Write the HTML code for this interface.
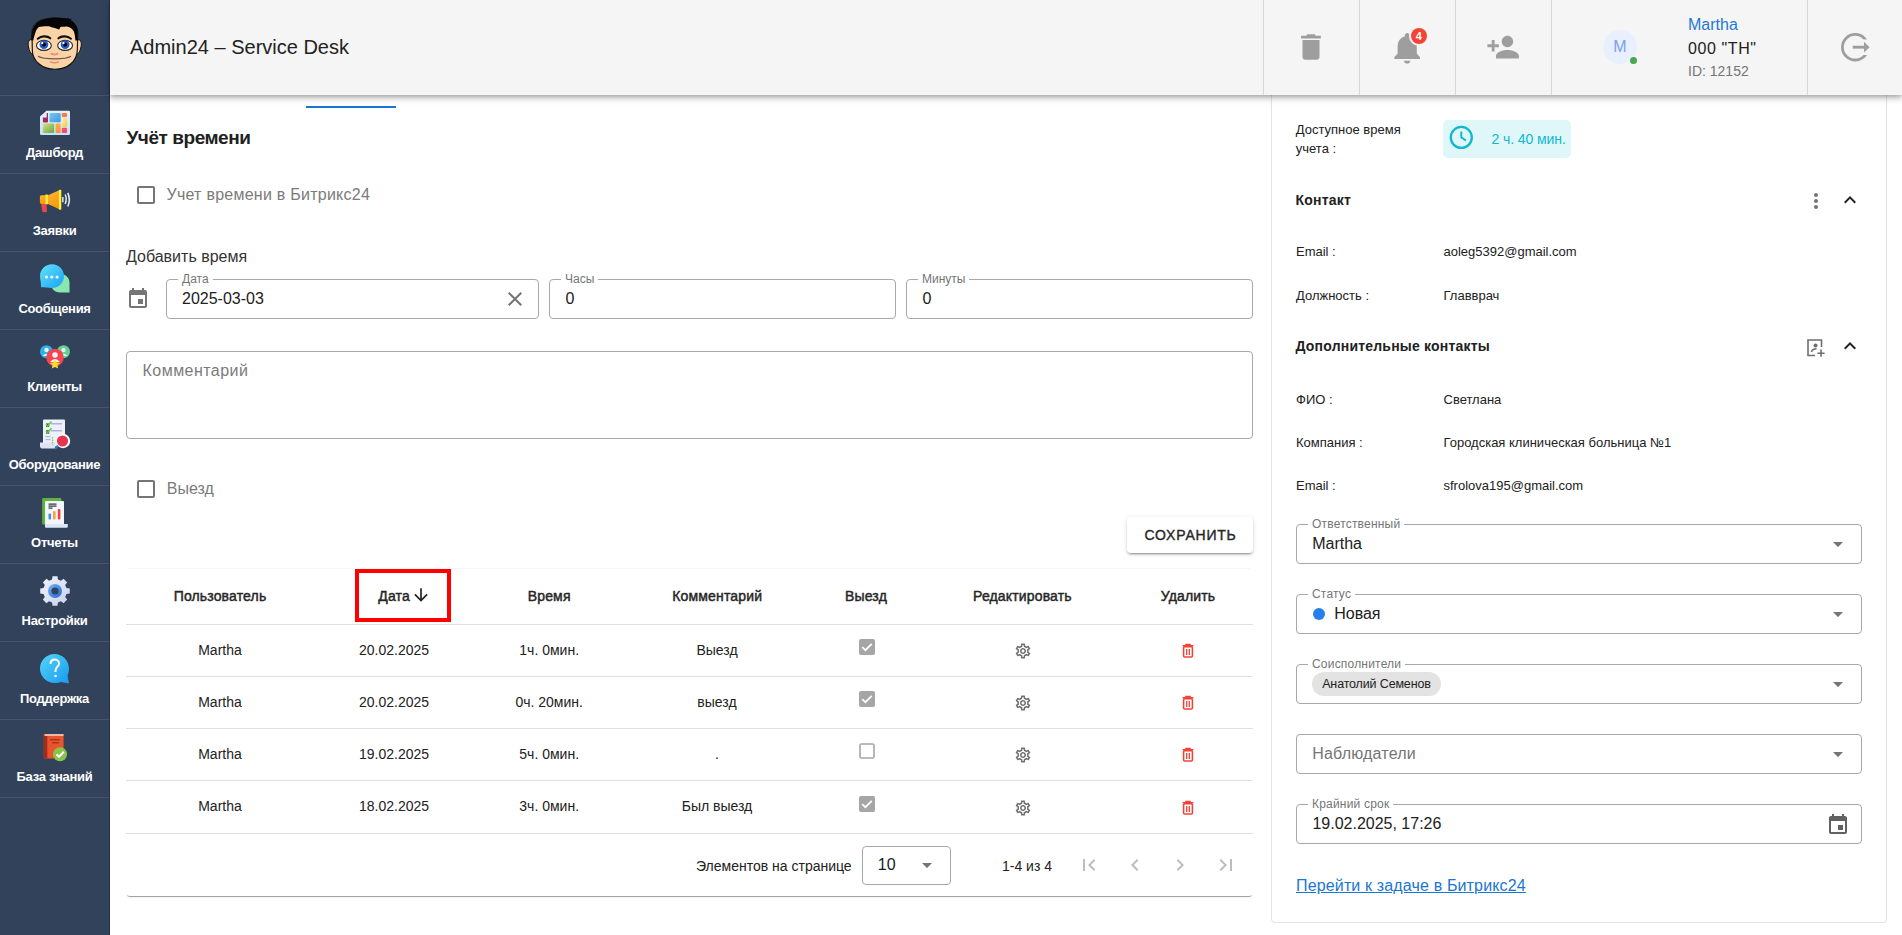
<!DOCTYPE html>
<html lang="ru">
<head>
<meta charset="utf-8">
<title>Admin24 – Service Desk</title>
<style>
*{box-sizing:border-box;margin:0;padding:0}
html,body{width:1902px;height:935px;overflow:hidden;background:#fff;font-family:"Liberation Sans",sans-serif;color:#212121}
.a{position:absolute}
.t{position:absolute;line-height:1;white-space:nowrap}
#side{position:absolute;left:0;top:0;width:110px;height:935px;background:#32425b;border-right:1px solid #26334a}
.si{position:absolute;left:0;width:109px;height:78px;border-top:1px solid #46556c}
.si .lbl{position:absolute;left:0;width:109px;text-align:center;top:50px;font-size:13px;font-weight:700;letter-spacing:-0.3px;color:#fff;line-height:1}
.si svg{position:absolute;left:39px;top:15px}
#hdr{position:absolute;left:110px;top:0;width:1792px;height:95px;background:#f5f5f5;box-shadow:0 2px 4px -1px rgba(0,0,0,.2),0 4px 5px 0 rgba(0,0,0,.14),0 1px 10px 0 rgba(0,0,0,.12);z-index:5}
.vd{position:absolute;top:0;width:1px;height:95px;background:#d6d6d6}
.fld{position:absolute;border:1px solid #a8a8a8;border-radius:4px;height:40px}
.flab{position:absolute;top:-7.3px;left:11px;padding:0 4px;background:#fff;font-size:12px;line-height:1;color:#757575;white-space:nowrap}
.cb{position:absolute;width:18px;height:18px;border:2px solid #757575;border-radius:2px}
.th{position:absolute;top:589px;font-size:14px;font-weight:400;-webkit-text-stroke:0.45px #262626;letter-spacing:0.15px;line-height:1;white-space:nowrap;color:#262626;transform:translateX(-50%)}
.td{position:absolute;font-size:14px;line-height:1;white-space:nowrap;color:#212121;transform:translateX(-50%)}
.hl{position:absolute;left:126px;width:1127px;height:1px;background:#e0e0e0}
.rl{position:absolute;font-size:13px;line-height:1;white-space:nowrap;color:#212121}
</style>
</head>
<body>
<!-- SIDEBAR -->
<div id="side">
  <svg class="a" style="left:0;top:0" width="110" height="95" viewBox="0 0 110 95">
    <path d="M32.5 40 C29 38.5 27.5 42 28.5 47 C29.3 51 30.5 53.5 33 54.5 Z" fill="#fbd3a6" stroke="#111" stroke-width="1"/>
    <path d="M77 40 C80.5 38.5 82 42 81 47 C80.2 51 79 53.5 76.5 54.5 Z" fill="#fbd3a6" stroke="#111" stroke-width="1"/>
    <path d="M32 34 C31.5 22 42 18 55 18 C68 18 78 22 77.8 34 L77.3 50 C77 61 68 69.2 55 69.2 C42 69.2 32.5 61 32.3 50 Z" fill="#fbd3a6" stroke="#111" stroke-width="1.1"/>
    <path d="M31.6 40.5 C30.5 25 38 18 55 17.8 C62 17.8 66 18.3 67.5 18.6 L68 17.6 L69.3 19.2 L71.4 18.6 L71 20.4 C76 23 78.5 28 77.8 40.5 L75.4 40.5 C75 34 74 31 72.8 30 C70.5 27.5 68 26.5 66 26.6 C63.5 26.8 61.5 27 60.5 27 L59.2 29.6 C56 28.5 53 27.5 50.8 27 L49 26.2 C45 26 41 26.5 39 27 C37.3 28.3 36.2 30.5 35.8 31.5 C34.5 35 33.8 38 33.2 40.5 Z" fill="#050505"/>
    <path d="M37.8 38.7 C40 36.8 42.5 36.3 44.5 36.4 C47 36.5 49 37.2 50.3 38.3" stroke="#111" stroke-width="2.1" fill="none" stroke-linecap="round"/>
    <path d="M58.4 38.3 C59.7 37.2 61.7 36.5 64.2 36.4 C66.2 36.3 68.7 36.8 71 38.7" stroke="#111" stroke-width="2.1" fill="none" stroke-linecap="round"/>
    <ellipse cx="43.9" cy="45.4" rx="7.4" ry="5" fill="#fff" stroke="#222" stroke-width="1.1"/>
    <ellipse cx="65.1" cy="45.4" rx="7.4" ry="5" fill="#fff" stroke="#222" stroke-width="1.1"/>
    <circle cx="43.9" cy="44.6" r="4.4" fill="#2a5cc4"/>
    <circle cx="65.1" cy="44.6" r="4.4" fill="#2a5cc4"/>
    <circle cx="43.9" cy="44.6" r="2.1" fill="#06061c"/>
    <circle cx="65.1" cy="44.6" r="2.1" fill="#06061c"/>
    <circle cx="42.3" cy="43.2" r="1.1" fill="#fff"/>
    <circle cx="63.5" cy="43.2" r="1.1" fill="#fff"/>
    <path d="M50.8 53.3 C53 54.8 56 54.8 58.2 53.3" stroke="#ec8a72" stroke-width="1.7" fill="none"/>
    <path d="M38 56.2 C42 58.6 48 58.8 55 58.8 C62 58.8 67.5 58.4 71 56.2" stroke="#6d5a4a" stroke-width="1.2" fill="none"/>
    <path d="M50 61.6 C53 63.2 56 63.2 58.8 61.6" stroke="#ec8a72" stroke-width="1.5" fill="none"/>
  </svg>
  <div class="si" style="top:95px">
   <svg class="a" style="left:0;top:-1px" width="109" height="78" viewBox="0 0 109 78">
    <defs><linearGradient id="dg1" x1="0" y1="0" x2="0" y2="1"><stop offset="0" stop-color="#e3f3fd"/><stop offset="1" stop-color="#c2e3f9"/></linearGradient>
    <linearGradient id="dgb" x1="0" y1="0" x2="1" y2="1"><stop offset="0" stop-color="#7cc7f7"/><stop offset="1" stop-color="#3d97de"/></linearGradient>
    <linearGradient id="dgg" x1="0" y1="0" x2="1" y2="1"><stop offset="0" stop-color="#dede7c"/><stop offset="1" stop-color="#64a64a"/></linearGradient>
    <linearGradient id="dgy" x1="0" y1="0" x2="1" y2="1"><stop offset="0" stop-color="#fff2cf"/><stop offset="1" stop-color="#ffc428"/></linearGradient>
    <linearGradient id="dgo" x1="0" y1="0" x2="0" y2="1"><stop offset="0" stop-color="#ffb637"/><stop offset="1" stop-color="#ff8c48"/></linearGradient></defs>
    <path d="M46.5 15.7 L68.8 15.7 Q70 15.7 70 17 L70 38.8 Q70 40.1 68.8 40.1 L41.3 40.1 Q40 40.1 40 38.8 L40 21.5 Z" fill="url(#dg1)"/>
    <path d="M46.7 17.9 L48 17.9 L48 26.5 Q48 27.4 47 27.4 L43.9 27.4 Q42.9 27.4 42.9 26.4 L42.9 22.4 L46.7 22.4 Z" fill="#a22a5e"/>
    <rect x="49.5" y="17.9" width="11.2" height="9.3" rx="1" fill="url(#dgb)"/>
    <rect x="61.8" y="17.9" width="5.3" height="4" rx="1" fill="#ff7c3e"/>
    <rect x="61.8" y="23" width="5.3" height="8.9" rx="1" fill="url(#dgy)"/>
    <rect x="42.9" y="28.5" width="11.3" height="9.6" rx="1" fill="url(#dgg)"/>
    <rect x="55.6" y="28.5" width="5.1" height="9.6" rx="1" fill="url(#dgo)"/>
    <rect x="61.8" y="32.8" width="5.3" height="5.3" rx="1" fill="#ff4a6e"/>
 </svg>
   <div class="lbl">Дашборд</div>
  </div>
  <div class="si" style="top:173px">
   <svg class="a" style="left:0;top:-1px" width="109" height="78" viewBox="0 0 109 78">
    <defs><linearGradient id="mgp" x1="0" y1="0" x2="0.3" y2="1"><stop offset="0" stop-color="#ffb833"/><stop offset="1" stop-color="#f79a0c"/></linearGradient></defs>
    <path d="M41.1 31 L46.5 31 L47 38.5 Q46.8 39.2 45.5 39.2 L43.5 39.2 Q42.5 39.2 42.3 38.2 Z" fill="#ec4450"/>
    <path d="M41.5 22.3 L45.5 22.3 L45.5 30.9 L41.5 30.9 Q39.9 30.9 39.9 29.3 L39.9 23.9 Q39.9 22.3 41.5 22.3 Z" fill="url(#mgp)"/>
    <path d="M48 22.3 L59.3 17.2 L59.3 36.3 L48 30.9 Z" fill="url(#mgp)"/>
    <rect x="45.2" y="21.6" width="2.8" height="9.6" fill="#ffe83a"/>
    <rect x="58.9" y="16.8" width="2.4" height="19.9" rx="0.8" fill="#fff03a"/>
    <rect x="62" y="24" width="1.7" height="5.2" fill="#c9d1e6"/>
    <path d="M65.2 21.5 Q67.2 26.2 65.2 31" stroke="#e4e7ee" stroke-width="1.5" fill="none"/>
    <path d="M67.8 19.9 Q70.8 26.7 67.8 33.5" stroke="#e4e7ee" stroke-width="1.6" fill="none"/>
 </svg>
   <div class="lbl">Заявки</div>
  </div>
  <div class="si" style="top:251px">
   <svg class="a" style="left:0;top:-1px" width="109" height="78" viewBox="0 0 109 78">
    <defs><linearGradient id="mg1" x1="0" y1="0" x2="1" y2="1"><stop offset="0" stop-color="#62e4fc"/><stop offset="1" stop-color="#1aa0f2"/></linearGradient>
    <linearGradient id="mg2" x1="0" y1="0" x2="1" y2="1"><stop offset="0" stop-color="#8de6b4"/><stop offset="1" stop-color="#86e8ae"/></linearGradient></defs>
    <path d="M60 23 C66 23 69.5 27 69.5 32 L69.5 41.5 L60 41.5 C54.5 41.5 51 37.5 51 32.5 C51 27 54.5 23 60 23 Z" fill="url(#mg2)"/>
    <path d="M52 13.3 C58.8 13.3 64 18.5 64 25 C64 31.5 58.8 37 52 37 C48 37 44 36.3 41 36.3 L40.8 31 C40.3 29 40 27 40 25 C40 18.5 45.2 13.3 52 13.3 Z" fill="url(#mg1)"/>
    <circle cx="46.5" cy="26" r="1.6" fill="#fff"/>
    <circle cx="51.8" cy="26" r="1.6" fill="#fff"/>
    <circle cx="57.1" cy="26" r="1.6" fill="#fff"/>
 </svg>
   <div class="lbl">Сообщения</div>
  </div>
  <div class="si" style="top:329px">
   <svg class="a" style="left:0;top:-1px" width="109" height="78" viewBox="0 0 109 78">
    <circle cx="46.5" cy="22.7" r="6.5" fill="#2db3ec"/>
    <circle cx="46.5" cy="21" r="2.2" fill="#e8f4fb"/><path d="M42.5 27 Q46.5 22.5 50.5 27" fill="#e8f4fb"/>
    <circle cx="63.5" cy="22.7" r="6.5" fill="#5fd194"/>
    <circle cx="63.5" cy="21" r="2.2" fill="#e8f7ee"/><path d="M59.5 27 Q63.5 22.5 67.5 27" fill="#e8f7ee"/>
    <circle cx="55" cy="28.5" r="8.8" fill="#f7454f"/>
    <circle cx="55" cy="26" r="2.8" fill="#f4f4f4"/><path d="M50 33 Q55 27 60 33" fill="#f4f4f4"/>
    <path d="M55 30.5 L56.6 33.6 L60 34 L57.5 36.3 L58.1 39.6 L55 38 L51.9 39.6 L52.5 36.3 L50 34 L53.4 33.6 Z" fill="#ffdc2a"/>
 </svg>
   <div class="lbl">Клиенты</div>
  </div>
  <div class="si" style="top:407px">
   <svg class="a" style="left:0;top:-1px" width="109" height="78" viewBox="0 0 109 78">
    <rect x="43" y="12.5" width="22" height="27" rx="1" fill="#eef1fb"/>
    <path d="M40 35.5 L55 35.5 L55 41.5 L42 41.5 Q40 41.5 40 38.5 Z" fill="#dfe4f5"/>
    <rect x="46" y="16.5" width="3.2" height="3.3" fill="#2a3b3a"/><path d="M46 17.2 L47.5 19 L51.5 14.5" stroke="#5bd42a" stroke-width="1.5" fill="none"/>
    <rect x="46" y="23.3" width="3.2" height="3.3" fill="#2a3b3a"/><path d="M46 24 L47.5 25.8 L51.5 21.3" stroke="#5bd42a" stroke-width="1.5" fill="none"/>
    <rect x="51" y="16" width="11" height="1.5" fill="#aab4e6"/>
    <rect x="51" y="23" width="11" height="1.5" fill="#aab4e6"/>
    <rect x="45.5" y="29" width="5" height="1.2" fill="#aab4e6"/>
    <rect x="45.5" y="32" width="5" height="1.2" fill="#aab4e6"/>
    <path d="M52.5 30 L52.5 38" stroke="#7ed321" stroke-width="1.2" stroke-dasharray="1.5 1"/>
    <circle cx="63" cy="34" r="7.2" fill="#fff"/>
    <circle cx="62.5" cy="34" r="5.6" fill="#e8354f"/>
    <path d="M55 42 L58 38.5" stroke="#2e78c8" stroke-width="2"/>
 </svg>
   <div class="lbl">Оборудование</div>
  </div>
  <div class="si" style="top:485px">
   <svg class="a" style="left:0;top:-1px" width="109" height="78" viewBox="0 0 109 78">
    <rect x="42.2" y="13" width="19.2" height="26.6" rx="1" fill="#5fb53a"/>
    <rect x="45" y="15.9" width="19" height="24" rx="1" fill="#f3f6fd"/>
    <path d="M45 39 L67.8 39 L67.8 41.5 Q67.8 42.8 66.5 42.8 L46 42.8 Q45 42.8 45 41.5 Z" fill="#dfe6f7"/>
    <rect x="48.5" y="18.5" width="8" height="1.2" fill="#333"/>
    <rect x="48.5" y="20.5" width="8" height="1.2" fill="#333"/>
    <rect x="48.5" y="22.5" width="4" height="1.2" fill="#333"/>
    <rect x="48.5" y="28.5" width="2.6" height="6" rx="1" fill="#3f8ef0"/>
    <rect x="53" y="26" width="2.6" height="8.5" rx="1" fill="#f9a330"/>
    <rect x="57.8" y="24" width="2.6" height="10.5" rx="1" fill="#e8453c"/>
 </svg>
   <div class="lbl">Отчеты</div>
  </div>
  <div class="si" style="top:563px">
   <svg class="a" style="left:0;top:-1px" width="109" height="78" viewBox="0 0 109 78">
    <defs><linearGradient id="gg1" x1="0" y1="0" x2="1" y2="1"><stop offset="0" stop-color="#f2f5fc"/><stop offset="1" stop-color="#c5d0ea"/></linearGradient>
    <linearGradient id="gg2" x1="0" y1="0" x2="1" y2="1"><stop offset="0" stop-color="#72b9f5"/><stop offset="1" stop-color="#2a63d9"/></linearGradient></defs>
    <path d="M52 13 L58 13 L58.6 17 L62.2 18.6 L65.5 16.2 L69.8 20.5 L67.4 23.8 L69 27.4 L73 28 L73 34 L69 34.6 L67.4 38.2 L69.8 41.5 L65.5 45.8 L62.2 43.4 L58.6 45 L58 49 L52 49 L51.4 45 L47.8 43.4 L44.5 45.8 L40.2 41.5 L42.6 38.2 L41 34.6 L37 34 L37 28 L41 27.4 L42.6 23.8 L40.2 20.5 L44.5 16.2 L47.8 18.6 L51.4 17 Z" transform="translate(55 28) scale(0.82) translate(-55 -31)" fill="url(#gg1)"/>
    <circle cx="55" cy="28" r="7" fill="url(#gg2)"/>
    <circle cx="55" cy="28" r="3.6" fill="#32425b"/>
 </svg>
   <div class="lbl">Настройки</div>
  </div>
  <div class="si" style="top:641px">
   <svg class="a" style="left:0;top:-1px" width="109" height="78" viewBox="0 0 109 78">
    <defs><linearGradient id="hg1" x1="0" y1="0" x2="1" y2="1"><stop offset="0" stop-color="#52d6f7"/><stop offset="1" stop-color="#1a9af0"/></linearGradient></defs>
    <path d="M54.5 13 C62.5 13 69 19.5 69 27.5 C69 30 68.5 32.5 67.5 34.5 L69 42.5 L61 41 C59 41.8 57 42 54.5 42 C46.5 42 40 35.5 40 27.5 C40 19.5 46.5 13 54.5 13 Z" fill="url(#hg1)"/>
    <path d="M50.5 23 C50.5 20 52.5 18.5 54.8 18.5 C57.2 18.5 59 20.2 59 22.5 C59 25.5 55.5 26 55.5 29.5 L55.5 31" stroke="#fff" stroke-width="2" fill="none"/>
    <circle cx="55.5" cy="35" r="1.3" fill="#fff"/>
 </svg>
   <div class="lbl">Поддержка</div>
  </div>
  <div class="si" style="top:719px">
   <svg class="a" style="left:0;top:-1px" width="109" height="78" viewBox="0 0 109 78">
    <rect x="43.8" y="15" width="19.8" height="24.5" rx="1" fill="#e8552d"/>
    <rect x="43.8" y="15" width="3.5" height="24.5" fill="#9e2d1a"/>
    <rect x="44.5" y="15" width="19" height="2" fill="#f4b7a2"/>
    <rect x="50" y="20" width="10" height="1.4" fill="#a8331c"/>
    <rect x="52" y="23" width="7" height="1.4" fill="#a8331c"/>
    <circle cx="60" cy="35.2" r="7" fill="#8bc34a"/>
    <path d="M56.5 35.3 L59 37.8 L63.8 32.8" stroke="#fff" stroke-width="2" fill="none"/>
 </svg>
   <div class="lbl">База знаний</div>
  </div>
  <div class="a" style="left:0;top:797px;width:109px;height:1px;background:#46556c"></div>
</div>

<!-- HEADER -->
<div id="hdr">
  <div class="t" style="left:20px;top:37px;font-size:20px;color:#222">Admin24 – Service Desk</div>
  <div class="vd" style="left:1153px"></div>
  <div class="vd" style="left:1249px"></div>
  <div class="vd" style="left:1345px"></div>
  <div class="vd" style="left:1441px"></div>
  <div class="vd" style="left:1697px"></div>
  <!-- trash -->
  <svg class="a" style="left:1184.4px;top:30.2px" width="34" height="34" viewBox="0 0 24 24"><path fill="#9e9e9e" d="M6 19c0 1.1.9 2 2 2h8c1.1 0 2-.9 2-2V7H6v12zM19 4h-3.5l-1-1h-5l-1 1H5v2h14V4z"/></svg>
  <!-- bell -->
  <svg class="a" style="left:1278px;top:28.7px" width="38.4" height="38.4" viewBox="0 0 24 24"><path fill="#9e9e9e" d="M12 21.6c1.1 0 2-.8 2-1.8h-4c0 1 .89 1.8 2 1.8zm6-6.7v-4.5c0-3.07-1.64-5.64-4.5-6.32V4c0-.83-.67-1.5-1.5-1.5s-1.5.67-1.5 1.5v.68C7.63 5.36 6 7.92 6 11v4.5l-2 2v1.2h16v-1.2l-2-2z"/></svg>
  <div class="a" style="left:1298.5px;top:26px;width:20px;height:20px;border-radius:50%;background:#f5f5f5"></div>
  <div class="a" style="left:1300.5px;top:27.5px;width:16.5px;height:16.5px;border-radius:50%;background:#f44336;color:#fff;font-size:11px;font-weight:700;line-height:16.5px;text-align:center">4</div>
  <!-- person add -->
  <svg class="a" style="left:1376px;top:30.3px" width="34.3" height="34.3" viewBox="0 0 24 24"><path fill="#9e9e9e" d="M15 12c2.21 0 4-1.79 4-4s-1.79-4-4-4-4 1.79-4 4 1.79 4 4 4zm-9-2V7H4v3H1v2h3v3h2v-3h3v-2H6zm9 4c-2.67 0-8 1.34-8 4v2h16v-2c0-2.66-5.33-4-8-4z"/></svg>
  <!-- avatar -->
  <div class="a" style="left:1493px;top:30px;width:34px;height:34px;border-radius:50%;background:#e8f0fe;color:#7aa1f2;font-size:16px;line-height:34px;text-align:center">M</div>
  <div class="a" style="left:1519.9px;top:56.8px;width:7.2px;height:7.2px;border-radius:50%;background:#47a94b"></div>
  <div class="t" style="left:1578px;top:16.5px;font-size:16px;color:#1e7ad6">Martha</div>
  <div class="t" style="left:1578px;top:40.5px;font-size:16px;color:#212121;letter-spacing:0.6px">000 "TH"</div>
  <div class="t" style="left:1578px;top:64.1px;font-size:14px;color:#757575">ID: 12152</div>
  <!-- logout -->
  <svg class="a" style="left:1726px;top:32px" width="36" height="32" viewBox="0 0 36 32">
    <circle cx="19.2" cy="15.2" r="12.8" stroke="#9e9e9e" stroke-width="2.8" fill="none"/>
    <rect x="27.2" y="7.4" width="9" height="15.6" fill="#f5f5f5"/>
    <rect x="16.7" y="13.75" width="11.8" height="2.9" fill="#9e9e9e"/>
    <path d="M28 9.8 L33.6 15.2 L28 20.5 Z" fill="#9e9e9e"/>
  </svg>
</div>

<!-- MAIN -->
<div id="main">
  <div class="a" style="left:306px;top:106px;width:90px;height:2px;background:#1976d2"></div>
  <div class="t" style="left:126.5px;top:127.9px;font-size:19px;font-weight:700;letter-spacing:-0.45px;color:#212121">Учёт времени</div>
  <div class="cb" style="left:137px;top:186px"></div>
  <div class="t" style="left:166.5px;top:186.5px;font-size:16px;color:#7b7b7b;letter-spacing:0.25px">Учет времени в Битрикс24</div>
  <div class="t" style="left:126px;top:248.5px;font-size:16px;color:#333">Добавить время</div>
  <svg class="a" style="left:126px;top:286.8px" width="24" height="24" viewBox="0 0 24 24"><path fill="#757575" d="M17 12h-5v5h5v-5zM16 1v2H8V1H6v2H5c-1.11 0-1.99.9-1.99 2L3 19c0 1.1.89 2 2 2h14c1.1 0 2-.9 2-2V5c0-1.1-.9-2-2-2h-1V1h-2zm3 18H5V8h14v11z"/></svg>
  <div class="fld" style="left:166px;top:279px;width:373px"><div class="flab">Дата</div></div>
  <div class="t" style="left:182px;top:290.7px;font-size:16px;color:#212121">2025-03-03</div>
  <svg class="a" style="left:503px;top:287px" width="24" height="24" viewBox="0 0 24 24"><path fill="#757575" d="M19 6.41L17.59 5 12 10.59 6.41 5 5 6.41 10.59 12 5 17.59 6.41 19 12 13.41 17.59 19 19 17.59 13.41 12z"/></svg>
  <div class="fld" style="left:549px;top:279px;width:347px"><div class="flab">Часы</div></div>
  <div class="t" style="left:565.4px;top:290.7px;font-size:16px;color:#212121">0</div>
  <div class="fld" style="left:906px;top:279px;width:347px"><div class="flab">Минуты</div></div>
  <div class="t" style="left:922.6px;top:290.7px;font-size:16px;color:#212121">0</div>
  <div class="a" style="left:126px;top:351px;width:1127px;height:88px;border:1px solid #a8a8a8;border-radius:4px"></div>
  <div class="t" style="left:142.6px;top:363.2px;font-size:16px;color:#7b7b7b;letter-spacing:0.45px">Комментарий</div>
  <div class="cb" style="left:137px;top:480px"></div>
  <div class="t" style="left:166.8px;top:480.5px;font-size:16px;color:#7b7b7b">Выезд</div>
  <div class="a" style="left:1127px;top:517px;width:126px;height:36px;border-radius:4px;background:#fff;box-shadow:0 3px 1px -2px rgba(0,0,0,.2),0 2px 2px 0 rgba(0,0,0,.14),0 1px 5px 0 rgba(0,0,0,.12)"></div>
  <div class="t" style="left:1144.5px;top:528px;font-size:14px;font-weight:400;-webkit-text-stroke:0.4px #262626;letter-spacing:0.78px;color:#262626">СОХРАНИТЬ</div>
  <!-- table card -->
  <div class="a" style="left:126px;top:568px;width:1127px;height:328px;border-radius:4px;background:#fff;box-shadow:0 1.5px 1px -1px rgba(0,0,0,.4)"></div>
  <div class="a" style="left:129px;top:568px;width:1121px;height:1px;background:#f6f6f6"></div>
  <div class="a" style="left:355px;top:569px;width:96px;height:53px;border:4px solid #f00"></div>
  <div class="th" style="left:220px">Пользователь</div>
  <div class="th" style="left:394px;transform:none;left:378.3px">Дата</div>
  <svg class="a" style="left:411px;top:585px" width="20" height="20" viewBox="0 0 24 24"><path fill="#212121" d="M20 12l-1.41-1.41L13 16.17V4h-2v12.17l-5.58-5.59L4 12l8 8 8-8z"/></svg>
  <div class="th" style="left:549.2px">Время</div>
  <div class="th" style="left:717.2px">Комментарий</div>
  <div class="th" style="left:866px">Выезд</div>
  <div class="th" style="left:1022.4px">Редактировать</div>
  <div class="th" style="left:1188px">Удалить</div>
  <div class="hl" style="top:624px"></div>
  <div class="hl" style="top:676px"></div>
  <div class="hl" style="top:728px"></div>
  <div class="hl" style="top:780px"></div>
  <div class="hl" style="top:833px"></div>
  <div class="td" style="left:220px;top:642.8px">Martha</div>
  <div class="td" style="left:394px;top:642.8px">20.02.2025</div>
  <div class="td" style="left:549.2px;top:642.8px">1ч. 0мин.</div>
  <div class="td" style="left:717px;top:642.8px">Выезд</div>
  <svg class="a" style="left:858.5px;top:639.0px" width="16" height="16" viewBox="0 0 16 16"><rect x="0" y="0" width="16" height="16" rx="2" fill="#a6a6a6"/><path d="M3.2 8.2 L6.4 11.2 L12.8 4.8" stroke="#fff" stroke-width="1.8" fill="none"/></svg>
  <svg class="a" style="left:1014px;top:642.0px" width="18" height="18" viewBox="0 0 24 24"><path fill="#6f6f6f" d="M19.43 12.98c.04-.32.07-.64.07-.98 0-.34-.03-.66-.07-.98l2.11-1.65c.19-.15.24-.42.12-.64l-2-3.46c-.09-.16-.26-.25-.44-.25-.06 0-.12.01-.17.03l-2.49 1c-.52-.4-1.08-.73-1.69-.98l-.38-2.65C14.46 2.18 14.25 2 14 2h-4c-.25 0-.46.18-.49.42l-.38 2.65c-.61.25-1.17.59-1.69.98l-2.49-1c-.06-.02-.12-.03-.18-.03-.17 0-.34.09-.43.25l-2 3.46c-.13.22-.07.49.12.64l2.11 1.65c-.04.32-.07.65-.07.98 0 .33.03.66.07.98l-2.11 1.65c-.19.15-.24.42-.12.64l2 3.46c.09.16.26.25.44.25.06 0 .12-.01.17-.03l2.49-1c.52.4 1.08.73 1.69.98l.38 2.65c.03.24.24.42.49.42h4c.25 0 .46-.18.49-.42l.38-2.65c.61-.25 1.17-.59 1.69-.98l2.49 1c.06.02.12.03.18.03.17 0 .34-.09.43-.25l2-3.46c.12-.22.07-.49-.12-.64l-2.11-1.65zm-1.98-1.71c.04.31.05.52.05.73 0 .21-.02.43-.05.73l-.14 1.13.89.7 1.08.84-.7 1.21-1.27-.51-1.04-.42-.9.68c-.43.32-.84.56-1.25.73l-1.06.43-.16 1.13-.2 1.35h-1.4l-.19-1.35-.16-1.13-1.06-.43c-.43-.18-.83-.41-1.23-.71l-.91-.7-1.06.43-1.27.51-.7-1.21 1.08-.84.89-.7-.14-1.13c-.03-.31-.05-.54-.05-.74s.02-.43.05-.73l.14-1.13-.89-.7-1.08-.84.7-1.21 1.27.51 1.04.42.9-.68c.43-.32.84-.56 1.25-.73l1.06-.43.16-1.13.2-1.35h1.39l.19 1.35.16 1.13 1.06.43c.43.18.83.41 1.23.71l.91.7 1.06-.43 1.27-.51.7 1.21-1.07.85-.89.7.14 1.13zM12 8c-2.21 0-4 1.79-4 4s1.79 4 4 4 4-1.79 4-4-1.79-4-4-4zm0 6c-1.1 0-2-.9-2-2s.9-2 2-2 2 .9 2 2-.9 2-2 2z"/></svg>
  <svg class="a" style="left:1180px;top:643.0px" width="16" height="16" viewBox="0 0 16 16"><path d="M2.6 2.8 H13.4 M6 2.8 V1.6 H10 V2.8" stroke="#f44336" stroke-width="1.6" fill="none"/><rect x="3.6" y="3.8" width="8.8" height="10.2" rx="1" fill="none" stroke="#f44336" stroke-width="1.6"/><path d="M6.7 6 V12 M9.3 6 V12" stroke="#f44336" stroke-width="1.3"/></svg>
  <div class="td" style="left:220px;top:694.8px">Martha</div>
  <div class="td" style="left:394px;top:694.8px">20.02.2025</div>
  <div class="td" style="left:549.2px;top:694.8px">0ч. 20мин.</div>
  <div class="td" style="left:717px;top:694.8px">выезд</div>
  <svg class="a" style="left:858.5px;top:691.0px" width="16" height="16" viewBox="0 0 16 16"><rect x="0" y="0" width="16" height="16" rx="2" fill="#a6a6a6"/><path d="M3.2 8.2 L6.4 11.2 L12.8 4.8" stroke="#fff" stroke-width="1.8" fill="none"/></svg>
  <svg class="a" style="left:1014px;top:694.0px" width="18" height="18" viewBox="0 0 24 24"><path fill="#6f6f6f" d="M19.43 12.98c.04-.32.07-.64.07-.98 0-.34-.03-.66-.07-.98l2.11-1.65c.19-.15.24-.42.12-.64l-2-3.46c-.09-.16-.26-.25-.44-.25-.06 0-.12.01-.17.03l-2.49 1c-.52-.4-1.08-.73-1.69-.98l-.38-2.65C14.46 2.18 14.25 2 14 2h-4c-.25 0-.46.18-.49.42l-.38 2.65c-.61.25-1.17.59-1.69.98l-2.49-1c-.06-.02-.12-.03-.18-.03-.17 0-.34.09-.43.25l-2 3.46c-.13.22-.07.49.12.64l2.11 1.65c-.04.32-.07.65-.07.98 0 .33.03.66.07.98l-2.11 1.65c-.19.15-.24.42-.12.64l2 3.46c.09.16.26.25.44.25.06 0 .12-.01.17-.03l2.49-1c.52.4 1.08.73 1.69.98l.38 2.65c.03.24.24.42.49.42h4c.25 0 .46-.18.49-.42l.38-2.65c.61-.25 1.17-.59 1.69-.98l2.49 1c.06.02.12.03.18.03.17 0 .34-.09.43-.25l2-3.46c.12-.22.07-.49-.12-.64l-2.11-1.65zm-1.98-1.71c.04.31.05.52.05.73 0 .21-.02.43-.05.73l-.14 1.13.89.7 1.08.84-.7 1.21-1.27-.51-1.04-.42-.9.68c-.43.32-.84.56-1.25.73l-1.06.43-.16 1.13-.2 1.35h-1.4l-.19-1.35-.16-1.13-1.06-.43c-.43-.18-.83-.41-1.23-.71l-.91-.7-1.06.43-1.27.51-.7-1.21 1.08-.84.89-.7-.14-1.13c-.03-.31-.05-.54-.05-.74s.02-.43.05-.73l.14-1.13-.89-.7-1.08-.84.7-1.21 1.27.51 1.04.42.9-.68c.43-.32.84-.56 1.25-.73l1.06-.43.16-1.13.2-1.35h1.39l.19 1.35.16 1.13 1.06.43c.43.18.83.41 1.23.71l.91.7 1.06-.43 1.27-.51.7 1.21-1.07.85-.89.7.14 1.13zM12 8c-2.21 0-4 1.79-4 4s1.79 4 4 4 4-1.79 4-4-1.79-4-4-4zm0 6c-1.1 0-2-.9-2-2s.9-2 2-2 2 .9 2 2-.9 2-2 2z"/></svg>
  <svg class="a" style="left:1180px;top:695.0px" width="16" height="16" viewBox="0 0 16 16"><path d="M2.6 2.8 H13.4 M6 2.8 V1.6 H10 V2.8" stroke="#f44336" stroke-width="1.6" fill="none"/><rect x="3.6" y="3.8" width="8.8" height="10.2" rx="1" fill="none" stroke="#f44336" stroke-width="1.6"/><path d="M6.7 6 V12 M9.3 6 V12" stroke="#f44336" stroke-width="1.3"/></svg>
  <div class="td" style="left:220px;top:746.8px">Martha</div>
  <div class="td" style="left:394px;top:746.8px">19.02.2025</div>
  <div class="td" style="left:549.2px;top:746.8px">5ч. 0мин.</div>
  <div class="td" style="left:717px;top:746.8px">.</div>
  <svg class="a" style="left:858.5px;top:743.0px" width="16" height="16" viewBox="0 0 16 16"><rect x="1" y="1" width="14" height="14" rx="1.5" fill="none" stroke="#a6a6a6" stroke-width="1.6"/></svg>
  <svg class="a" style="left:1014px;top:746.0px" width="18" height="18" viewBox="0 0 24 24"><path fill="#6f6f6f" d="M19.43 12.98c.04-.32.07-.64.07-.98 0-.34-.03-.66-.07-.98l2.11-1.65c.19-.15.24-.42.12-.64l-2-3.46c-.09-.16-.26-.25-.44-.25-.06 0-.12.01-.17.03l-2.49 1c-.52-.4-1.08-.73-1.69-.98l-.38-2.65C14.46 2.18 14.25 2 14 2h-4c-.25 0-.46.18-.49.42l-.38 2.65c-.61.25-1.17.59-1.69.98l-2.49-1c-.06-.02-.12-.03-.18-.03-.17 0-.34.09-.43.25l-2 3.46c-.13.22-.07.49.12.64l2.11 1.65c-.04.32-.07.65-.07.98 0 .33.03.66.07.98l-2.11 1.65c-.19.15-.24.42-.12.64l2 3.46c.09.16.26.25.44.25.06 0 .12-.01.17-.03l2.49-1c.52.4 1.08.73 1.69.98l.38 2.65c.03.24.24.42.49.42h4c.25 0 .46-.18.49-.42l.38-2.65c.61-.25 1.17-.59 1.69-.98l2.49 1c.06.02.12.03.18.03.17 0 .34-.09.43-.25l2-3.46c.12-.22.07-.49-.12-.64l-2.11-1.65zm-1.98-1.71c.04.31.05.52.05.73 0 .21-.02.43-.05.73l-.14 1.13.89.7 1.08.84-.7 1.21-1.27-.51-1.04-.42-.9.68c-.43.32-.84.56-1.25.73l-1.06.43-.16 1.13-.2 1.35h-1.4l-.19-1.35-.16-1.13-1.06-.43c-.43-.18-.83-.41-1.23-.71l-.91-.7-1.06.43-1.27.51-.7-1.21 1.08-.84.89-.7-.14-1.13c-.03-.31-.05-.54-.05-.74s.02-.43.05-.73l.14-1.13-.89-.7-1.08-.84.7-1.21 1.27.51 1.04.42.9-.68c.43-.32.84-.56 1.25-.73l1.06-.43.16-1.13.2-1.35h1.39l.19 1.35.16 1.13 1.06.43c.43.18.83.41 1.23.71l.91.7 1.06-.43 1.27-.51.7 1.21-1.07.85-.89.7.14 1.13zM12 8c-2.21 0-4 1.79-4 4s1.79 4 4 4 4-1.79 4-4-1.79-4-4-4zm0 6c-1.1 0-2-.9-2-2s.9-2 2-2 2 .9 2 2-.9 2-2 2z"/></svg>
  <svg class="a" style="left:1180px;top:747.0px" width="16" height="16" viewBox="0 0 16 16"><path d="M2.6 2.8 H13.4 M6 2.8 V1.6 H10 V2.8" stroke="#f44336" stroke-width="1.6" fill="none"/><rect x="3.6" y="3.8" width="8.8" height="10.2" rx="1" fill="none" stroke="#f44336" stroke-width="1.6"/><path d="M6.7 6 V12 M9.3 6 V12" stroke="#f44336" stroke-width="1.3"/></svg>
  <div class="td" style="left:220px;top:799.3px">Martha</div>
  <div class="td" style="left:394px;top:799.3px">18.02.2025</div>
  <div class="td" style="left:549.2px;top:799.3px">3ч. 0мин.</div>
  <div class="td" style="left:717px;top:799.3px">Был выезд</div>
  <svg class="a" style="left:858.5px;top:795.5px" width="16" height="16" viewBox="0 0 16 16"><rect x="0" y="0" width="16" height="16" rx="2" fill="#a6a6a6"/><path d="M3.2 8.2 L6.4 11.2 L12.8 4.8" stroke="#fff" stroke-width="1.8" fill="none"/></svg>
  <svg class="a" style="left:1014px;top:798.5px" width="18" height="18" viewBox="0 0 24 24"><path fill="#6f6f6f" d="M19.43 12.98c.04-.32.07-.64.07-.98 0-.34-.03-.66-.07-.98l2.11-1.65c.19-.15.24-.42.12-.64l-2-3.46c-.09-.16-.26-.25-.44-.25-.06 0-.12.01-.17.03l-2.49 1c-.52-.4-1.08-.73-1.69-.98l-.38-2.65C14.46 2.18 14.25 2 14 2h-4c-.25 0-.46.18-.49.42l-.38 2.65c-.61.25-1.17.59-1.69.98l-2.49-1c-.06-.02-.12-.03-.18-.03-.17 0-.34.09-.43.25l-2 3.46c-.13.22-.07.49.12.64l2.11 1.65c-.04.32-.07.65-.07.98 0 .33.03.66.07.98l-2.11 1.65c-.19.15-.24.42-.12.64l2 3.46c.09.16.26.25.44.25.06 0 .12-.01.17-.03l2.49-1c.52.4 1.08.73 1.69.98l.38 2.65c.03.24.24.42.49.42h4c.25 0 .46-.18.49-.42l.38-2.65c.61-.25 1.17-.59 1.69-.98l2.49 1c.06.02.12.03.18.03.17 0 .34-.09.43-.25l2-3.46c.12-.22.07-.49-.12-.64l-2.11-1.65zm-1.98-1.71c.04.31.05.52.05.73 0 .21-.02.43-.05.73l-.14 1.13.89.7 1.08.84-.7 1.21-1.27-.51-1.04-.42-.9.68c-.43.32-.84.56-1.25.73l-1.06.43-.16 1.13-.2 1.35h-1.4l-.19-1.35-.16-1.13-1.06-.43c-.43-.18-.83-.41-1.23-.71l-.91-.7-1.06.43-1.27.51-.7-1.21 1.08-.84.89-.7-.14-1.13c-.03-.31-.05-.54-.05-.74s.02-.43.05-.73l.14-1.13-.89-.7-1.08-.84.7-1.21 1.27.51 1.04.42.9-.68c.43-.32.84-.56 1.25-.73l1.06-.43.16-1.13.2-1.35h1.39l.19 1.35.16 1.13 1.06.43c.43.18.83.41 1.23.71l.91.7 1.06-.43 1.27-.51.7 1.21-1.07.85-.89.7.14 1.13zM12 8c-2.21 0-4 1.79-4 4s1.79 4 4 4 4-1.79 4-4-1.79-4-4-4zm0 6c-1.1 0-2-.9-2-2s.9-2 2-2 2 .9 2 2-.9 2-2 2z"/></svg>
  <svg class="a" style="left:1180px;top:799.5px" width="16" height="16" viewBox="0 0 16 16"><path d="M2.6 2.8 H13.4 M6 2.8 V1.6 H10 V2.8" stroke="#f44336" stroke-width="1.6" fill="none"/><rect x="3.6" y="3.8" width="8.8" height="10.2" rx="1" fill="none" stroke="#f44336" stroke-width="1.6"/><path d="M6.7 6 V12 M9.3 6 V12" stroke="#f44336" stroke-width="1.3"/></svg>
  <div class="t" style="left:696px;top:858.5px;font-size:14px;color:#212121">Элементов на странице</div>
  <div class="a" style="left:861.5px;top:845.5px;width:89px;height:39px;border:1px solid #a8a8a8;border-radius:4px"></div>
  <div class="t" style="left:877.8px;top:856.9px;font-size:16px;color:#212121">10</div>
  <svg class="a" style="left:922px;top:862.8px" width="10" height="5.2" viewBox="0 0 10 5"><path d="M0 0 L10 0 L5 5 Z" fill="#757575"/></svg>
  <div class="t" style="left:1002px;top:858.5px;font-size:14px;color:#212121">1-4 из 4</div>
  <svg class="a" style="left:1077px;top:853px" width="24" height="24" viewBox="0 0 24 24"><path fill="#bdbdbd" d="M18.41 16.59L13.82 12l4.59-4.59L17 6l-6 6 6 6zM6 6h2v12H6z"/></svg>
  <svg class="a" style="left:1123px;top:853px" width="24" height="24" viewBox="0 0 24 24"><path fill="#bdbdbd" d="M15.41 7.41L14 6l-6 6 6 6 1.41-1.41L10.83 12z"/></svg>
  <svg class="a" style="left:1168px;top:853px" width="24" height="24" viewBox="0 0 24 24"><path fill="#bdbdbd" d="M10 6L8.59 7.41 13.17 12l-4.58 4.59L10 18l6-6z"/></svg>
  <svg class="a" style="left:1214px;top:853px" width="24" height="24" viewBox="0 0 24 24"><path fill="#bdbdbd" d="M5.59 7.41L10.18 12l-4.59 4.59L7 18l6-6-6-6zM16 6h2v12h-2z"/></svg>
</div>

<!-- RIGHT CARD -->
<div id="rc">
  <div class="a" style="left:1271px;top:40px;width:616px;height:883px;border:1px solid #e3e3e3;border-radius:4px;background:#fff"></div>
  <div class="t" style="left:1295.8px;top:122.5px;font-size:13px;color:#212121;">Доступное время</div>
  <div class="t" style="left:1295.8px;top:141.8px;font-size:13px;color:#212121;">учета :</div>
  <div class="a" style="left:1443px;top:120px;width:128px;height:38px;border-radius:5px;background:#e0f7fa"></div>
  <svg class="a" style="left:1449px;top:125px" width="25" height="25" viewBox="0 0 25 25"><circle cx="12.3" cy="12.4" r="10.5" stroke="#0fb8cf" stroke-width="2.3" fill="none"/><path d="M12.3 6.5 V12.4 L17 15.5" stroke="#0fb8cf" stroke-width="1.9" fill="none"/></svg>
  <div class="t" style="left:1491.6px;top:132.0px;font-size:14px;color:#0fb8cf;letter-spacing:-0.1px">2 ч. 40 мин.</div>
  <div class="t" style="left:1295.5px;top:192.9px;font-size:14px;color:#212121;font-weight:700;letter-spacing:0.2px">Контакт</div>
  <svg class="a" style="left:1804px;top:189.4px" width="24" height="24" viewBox="0 0 24 24"><path fill="#757575" d="M12 8c1.1 0 2-.9 2-2s-.9-2-2-2-2 .9-2 2 .9 2 2 2zm0 2c-1.1 0-2 .9-2 2s.9 2 2 2 2-.9 2-2-.9-2-2-2zm0 6c-1.1 0-2 .9-2 2s.9 2 2 2 2-.9 2-2-.9-2-2-2z"/></svg>
  <svg class="a" style="left:1838px;top:187.5px" width="24" height="24" viewBox="0 0 24 24"><path fill="#212121" d="M7.41 15.41L12 10.83l4.59 4.58L18 14l-6-6-6 6z"/></svg>
  <div class="t" style="left:1296px;top:245.0px;font-size:13px;color:#212121;">Email :</div>
  <div class="t" style="left:1443.5px;top:245.0px;font-size:13px;color:#212121;">aoleg5392@gmail.com</div>
  <div class="t" style="left:1296px;top:288.8px;font-size:13px;color:#212121;">Должность :</div>
  <div class="t" style="left:1443.5px;top:288.8px;font-size:13px;color:#212121;">Главврач</div>
  <div class="t" style="left:1295.5px;top:338.9px;font-size:14px;color:#212121;font-weight:700;letter-spacing:0.2px">Дополнительные контакты</div>
  <svg class="a" style="left:1806px;top:338px" width="20" height="20" viewBox="0 0 20 20"><path d="M15.5 9 V2 H2 V17.5 H9" stroke="#6f6f6f" stroke-width="1.6" fill="none"/><circle cx="9.5" cy="7.5" r="2" fill="#6f6f6f"/><path d="M5.5 14 C6 11.5 8 10.8 10.5 10.8" stroke="#6f6f6f" stroke-width="1.6" fill="none"/><path d="M15 11.5 V18.8 M11.4 15.2 H18.6" stroke="#6f6f6f" stroke-width="1.6"/></svg>
  <svg class="a" style="left:1838px;top:333.5px" width="24" height="24" viewBox="0 0 24 24"><path fill="#212121" d="M7.41 15.41L12 10.83l4.59 4.58L18 14l-6-6-6 6z"/></svg>
  <div class="t" style="left:1296px;top:392.7px;font-size:13px;color:#212121;">ФИО :</div>
  <div class="t" style="left:1443.5px;top:392.7px;font-size:13px;color:#212121;">Светлана</div>
  <div class="t" style="left:1296px;top:435.6px;font-size:13px;color:#212121;">Компания :</div>
  <div class="t" style="left:1443.5px;top:435.6px;font-size:13px;color:#212121;">Городская клиническая больница №1</div>
  <div class="t" style="left:1296px;top:478.8px;font-size:13px;color:#212121;">Email :</div>
  <div class="t" style="left:1443.5px;top:478.8px;font-size:13px;color:#212121;">sfrolova195@gmail.com</div>
  <div class="fld" style="left:1296px;top:524px;width:566px;height:40px"><div class="flab" style="letter-spacing:0.2px">Ответственный</div></div>
  <div class="t" style="left:1312.2px;top:536.4px;font-size:16px;color:#212121;">Martha</div>
  <svg class="a" style="left:1833px;top:542px" width="10" height="5.2" viewBox="0 0 10 5"><path d="M0 0 L10 0 L5 5 Z" fill="#757575"/></svg>
  <div class="fld" style="left:1296px;top:594px;width:566px;height:40px"><div class="flab" style="letter-spacing:0.2px">Статус</div></div>
  <div class="a" style="left:1313px;top:607.7px;width:12px;height:12px;border-radius:50%;background:#2680eb"></div>
  <div class="t" style="left:1334.2px;top:606.3px;font-size:16px;color:#212121;">Новая</div>
  <svg class="a" style="left:1833px;top:612px" width="10" height="5.2" viewBox="0 0 10 5"><path d="M0 0 L10 0 L5 5 Z" fill="#757575"/></svg>
  <div class="fld" style="left:1296px;top:664px;width:566px;height:40px"><div class="flab" style="letter-spacing:0.2px">Соисполнители</div></div>
  <div class="a" style="left:1312px;top:672px;width:129px;height:24px;border-radius:12px;background:#e3e3e3"></div>
  <div class="t" style="left:1322.2px;top:678.4px;font-size:12.5px;color:#212121;letter-spacing:-0.15px">Анатолий Семенов</div>
  <svg class="a" style="left:1833px;top:682px" width="10" height="5.2" viewBox="0 0 10 5"><path d="M0 0 L10 0 L5 5 Z" fill="#757575"/></svg>
  <div class="fld" style="left:1296px;top:734px;width:566px;height:40px"></div>
  <div class="t" style="left:1312.2px;top:745.5px;font-size:16px;color:#757575;letter-spacing:0.2px">Наблюдатели</div>
  <svg class="a" style="left:1833px;top:752px" width="10" height="5.2" viewBox="0 0 10 5"><path d="M0 0 L10 0 L5 5 Z" fill="#757575"/></svg>
  <div class="fld" style="left:1296px;top:804px;width:566px;height:40px"><div class="flab" style="letter-spacing:0.2px">Крайний срок</div></div>
  <div class="t" style="left:1312.4px;top:815.6px;font-size:16px;color:#212121;">19.02.2025, 17:26</div>
  <svg class="a" style="left:1826px;top:812.5px" width="24" height="24" viewBox="0 0 24 24"><path fill="#616161" d="M17 12h-5v5h5v-5zM16 1v2H8V1H6v2H5c-1.11 0-1.99.9-1.99 2L3 19c0 1.1.89 2 2 2h14c1.1 0 2-.9 2-2V5c0-1.1-.9-2-2-2h-1V1h-2zm3 18H5V8h14v11z"/></svg>
  <div class="t" style="left:1296px;top:878.3px;font-size:16px;color:#1976d2;text-decoration:underline;letter-spacing:0.15px">Перейти к задаче в Битрикс24</div>
</div>
</body>
</html>
